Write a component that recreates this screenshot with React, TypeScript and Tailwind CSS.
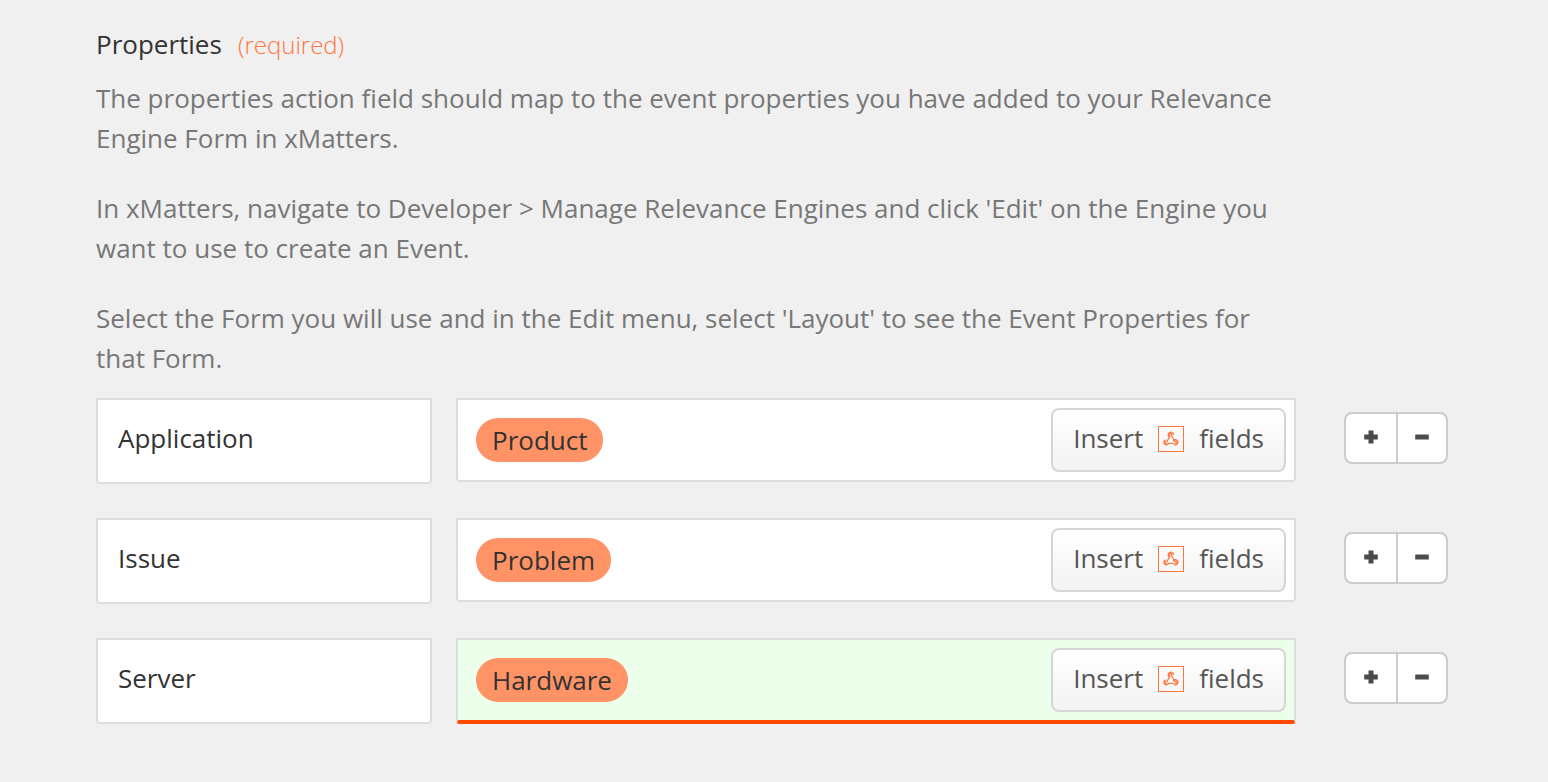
import React, { useState } from "react";
import clsx from "clsx";

interface PropertyRow {
    id: number;
    name: string;
    field: string | null;
    active: boolean;
}

const initialRows: PropertyRow[] = [
    { id: 1, name: "Application", field: "Product", active: false },
    { id: 2, name: "Issue", field: "Problem", active: false },
    { id: 3, name: "Server", field: "Hardware", active: true },
];

const helpText = [
    "The properties action field should map to the event properties you have added to your Relevance Engine Form in xMatters.",
    "In xMatters, navigate to Developer > Manage Relevance Engines and click 'Edit' on the Engine you want to use to create an Event.",
    "Select the Form you will use and in the Edit menu, select 'Layout' to see the Event Properties for that Form.",
];

function WebhookIcon() {
    return (
        <svg viewBox="0 0 26 26" className="mt-0.5 h-[26px] w-[26px] shrink-0" fill="none" stroke="#ff7542" aria-hidden="true">
            <rect x="0.5" y="0.5" width="25" height="25" />
            <g strokeLinecap="round" strokeWidth="1.2">
                {/* Top hook */}
                <path d="M11 11a2.800 2.800 0 1 1 4.700-2.500" />
                <path d="M12 9.800a1.300 1.300 0 1 1 2-1.300" />
                <path d="M13.300 9.300l3.200 5.200M11.700 10.800l-2.800 4.800" />
                {/* Left hook */}
                <path d="M7.200 14.100a2.500 2.500 0 1 0 3.400 3.200h4.600" />
                <path d="M7.700 15.700a1.100 1.100 0 1 0 1.100 1.300" />
                {/* Right hook */}
                <path d="M15.500 14.700a2.500 2.500 0 1 1 .6 3.700" />
                <path d="M16.800 15.900a1.200 1.200 0 1 1 .5 1.400" />
            </g>
        </svg>
    );
}

function PlusIcon() {
    return (
        <svg viewBox="0 0 14 14" className="h-[14px] w-[14px]" fill="#4b4b4b" aria-hidden="true">
            <path d="M4.500 0.500h5v4h4.300v5H9.500v4h-5v-4H0.200v-5h4.300z" />
        </svg>
    );
}

function MinusIcon() {
    return (
        <svg viewBox="0 0 14 14" className="h-[14px] w-[14px]" fill="#4b4b4b" aria-hidden="true">
            <rect x="0.2" y="4.5" width="13.6" height="5" rx="0.5" />
        </svg>
    );
}

export default function App() {
    const [rows, setRows] = useState(initialRows);

    const renameRow = (id: number, name: string) =>
        setRows(rows.map((row) => (row.id === id ? { ...row, name } : row)));

    const addRow = (index: number) => {
        const id = Math.max(...rows.map((row) => row.id)) + 1;
        const next = [...rows];
        next.splice(index + 1, 0, { id, name: "", field: null, active: false });
        setRows(next);
    };

    const removeRow = (id: number) => {
        if (rows.length > 1) setRows(rows.filter((row) => row.id !== id));
    };

    return (
        <main className="min-h-screen bg-[#f0f0f0] pt-6 pr-25 pb-14 pl-24 font-['Open_Sans',sans-serif] text-[26px] leading-10 text-[#333]">
            <section aria-labelledby="properties-title">
                <div className="flex items-baseline gap-4">
                    <h2 id="properties-title">Properties</h2>
                    <span className="text-2xl leading-10 font-light text-[#ff7542]">(required)</span>
                </div>

                <div className="mt-[13px] flex flex-col gap-[30px] pr-38 text-[#777]">
                    {helpText.map((text) => (
                        <p key={text}>{text}</p>
                    ))}
                </div>

                <div className="mt-5 flex flex-col gap-[34px]">
                    {rows.map((row, index) => (
                        <div key={row.id} className="flex items-start gap-12">
                            <div className="grid min-w-0 flex-1 grid-cols-[2fr_5fr] items-start gap-6">
                                <input
                                    type="text"
                                    aria-label="Property name"
                                    value={row.name}
                                    onChange={(e) => renameRow(row.id, e.target.value)}
                                    className="h-[86px] w-full min-w-0 rounded-b-sm border-2 border-[#ddd] bg-white px-5 pb-1.5 outline-none"
                                />

                                <div
                                    className={clsx(
                                        "flex min-w-0 items-center rounded-b-sm border-2 border-[#ddd] py-2 pr-2 pl-[18px]",
                                        row.active ? "border-b-4 border-b-[#ff4a00] bg-[#ebffea]" : "bg-white"
                                    )}
                                >
                                    {row.field && (
                                        <span className="rounded-full bg-[#ff9366] px-4 py-[2px]">{row.field}</span>
                                    )}
                                    <input type="text" aria-label="Property value" className="min-w-0 flex-1 px-2 outline-none" />
                                    <button
                                        type="button"
                                        className="flex h-16 shrink-0 items-center gap-[15px] rounded-lg border-2 border-[#d5d5d5] bg-linear-to-b from-white to-[#f3f3f3] px-5 pb-1 text-[#555]"
                                    >
                                        Insert
                                        <WebhookIcon />
                                        fields
                                    </button>
                                </div>
                            </div>

                            <div className="mt-[14px] flex h-[52px] w-[104px] shrink-0 divide-x-2 divide-[#ccc] rounded-lg border-2 border-[#ccc] bg-white">
                                <button
                                    type="button"
                                    aria-label="Add property"
                                    onClick={() => addRow(index)}
                                    className="flex w-13 items-center justify-center pb-0.5"
                                >
                                    <PlusIcon />
                                </button>
                                <button
                                    type="button"
                                    aria-label="Remove property"
                                    onClick={() => removeRow(row.id)}
                                    className="flex flex-1 items-center justify-center pb-0.5"
                                >
                                    <MinusIcon />
                                </button>
                            </div>
                        </div>
                    ))}
                </div>
            </section>
        </main>
    );
}
